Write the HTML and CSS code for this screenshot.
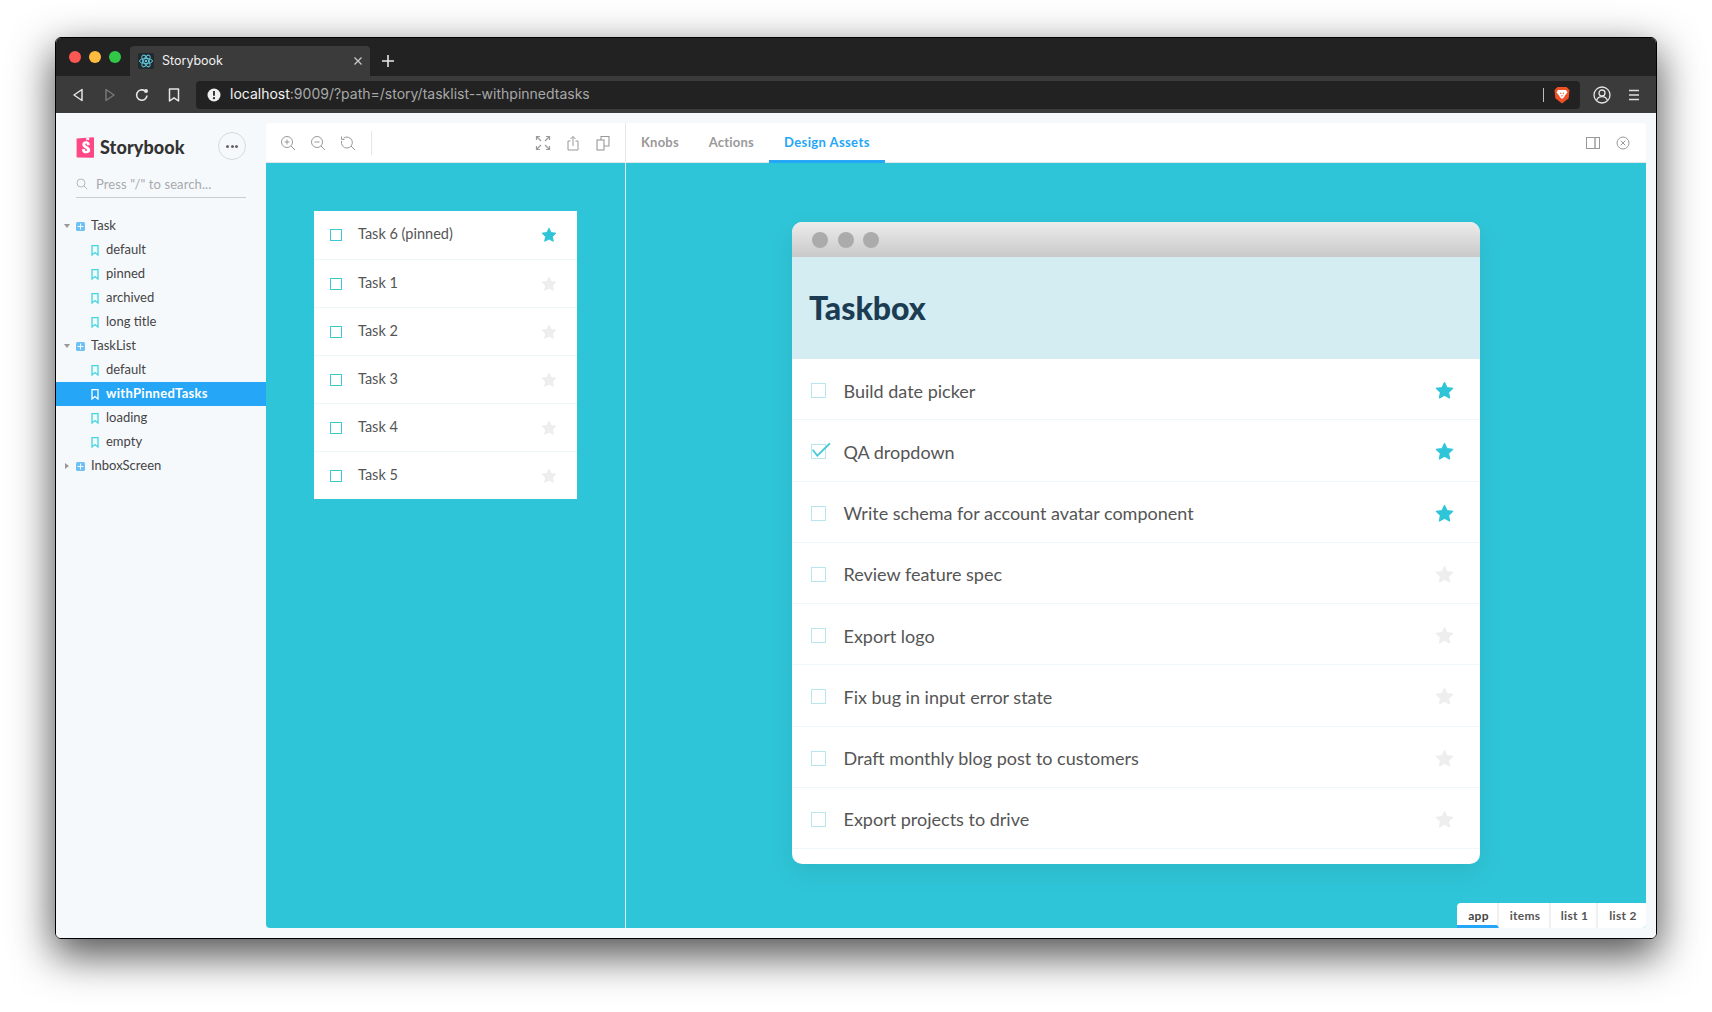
FILE: index.html
```html
<!DOCTYPE html>
<html lang="en">
<head>
  <meta charset="UTF-8">
  <title>Storybook</title>
  <link rel="stylesheet" href="styles.css">
</head>
<body>
  <svg class="defs" width="0" height="0">
    <symbol id="star" viewBox="0 0 16 16"><path d="M8 1.200l2.100 4.400 4.800.6-3.500 3.300.9 4.800L8 12l-4.300 2.300.9-4.800L1.100 6.200l4.800-.6z" fill="currentColor" stroke="currentColor" stroke-width="1" stroke-linejoin="round"/></symbol>
    <symbol id="mark" viewBox="0 0 8 11"><path d="M1 .7h6v9.300L4 7.600 1 10z" fill="none" stroke="currentColor" stroke-width="1.300"/></symbol>
    <symbol id="comp" viewBox="0 0 9 9"><rect width="9" height="9" rx="1.500" fill="#6ec1f5"/><path d="M4.500 1.500v6M1.500 4.500h6" stroke="#f6f9fc" stroke-width="1"/></symbol>
  </svg>

  <div class="window">
    <div class="tabstrip">
      <div class="lights"><i class="red"></i><i class="amber"></i><i class="green"></i></div>
      <div class="tab">
        <svg class="favicon" viewBox="0 0 16 16"><rect width="16" height="16" rx="2" fill="#20292c"/><g fill="none" stroke="#61c5dc" stroke-width="1"><ellipse cx="8" cy="8" rx="6.500" ry="2.600"/><ellipse cx="8" cy="8" rx="6.500" ry="2.600" transform="rotate(60 8 8)"/><ellipse cx="8" cy="8" rx="6.500" ry="2.600" transform="rotate(120 8 8)"/></g><circle cx="8" cy="8" r="1.300" fill="#61c5dc"/></svg>
        <span class="tab-title">Storybook</span>
        <svg class="tab-close" viewBox="0 0 10 10"><path d="M1.500 1.500l7 7M8.500 1.500l-7 7" stroke="#c9c9c9" stroke-width="1.300"/></svg>
      </div>
      <svg class="tab-new" viewBox="0 0 14 14"><path d="M7 1v12M1 7h12" stroke="#e8e8e8" stroke-width="1.600"/></svg>
    </div>

    <div class="toolbar">
      <div class="nav-buttons">
        <svg viewBox="0 0 16 16"><path d="M12 2.500v11L4 8z" fill="none" stroke="#e6e6e6" stroke-width="1.500" stroke-linejoin="round"/></svg>
        <svg viewBox="0 0 16 16"><path d="M4 2.500v11L12 8z" fill="none" stroke="#777" stroke-width="1.500" stroke-linejoin="round"/></svg>
        <svg viewBox="0 0 16 16"><path d="M13 8.500A5.200 5.200 0 1 1 10.800 3.800" fill="none" stroke="#e6e6e6" stroke-width="1.600"/><circle cx="12" cy="4" r="2" fill="#e6e6e6"/></svg>
        <svg viewBox="0 0 16 16"><path d="M3.500 2h9v12L8 10.800 3.500 14z" fill="none" stroke="#e6e6e6" stroke-width="1.500" stroke-linejoin="round"/></svg>
      </div>
      <div class="address">
        <svg class="info" viewBox="0 0 14 14"><circle cx="7" cy="7" r="6.500" fill="#efefef"/><path d="M7 3v4.800" stroke="#222" stroke-width="1.800"/><circle cx="7" cy="10.200" r="1.100" fill="#222"/></svg>
        <span class="url"><b>localhost</b>:9009/?path=/story/tasklist--withpinnedtasks</span>
        <span class="address-sep"></span>
        <svg class="brave" viewBox="0 0 16 18"><path d="M3.500 1h9L15.500 4l-.8 8.200L8 17.500 1.300 12.200.5 4z" fill="#ef5027"/><path d="M4 4h8l1.500 2.300-2.500 3.200-1 1.700L8 13 6 11.200l-1-1.700-2.500-3.200z" fill="#fff"/><path d="M6 7.300h1.300M8.700 7.300H10M8 9v1.500" stroke="#ef5027" stroke-width="1"/></svg>
      </div>
      <svg class="account" viewBox="0 0 18 18"><g fill="none" stroke="#e6e6e6" stroke-width="1.300"><circle cx="9" cy="9" r="8"/><circle cx="9" cy="7" r="3"/><path d="M3.500 14.500c1-2.800 3-3.800 5.500-3.800s4.500 1 5.500 3.800"/></g></svg>
      <svg class="menu" viewBox="0 0 12 12"><path d="M1 1.500h10M1 6h10M1 10.500h10" stroke="#dedede" stroke-width="1.500"/></svg>
    </div>

    <div class="app">
      <aside class="sidebar">
        <div class="brand">
          <svg class="logo" viewBox="0 0 18 21"><path d="M.6 1.500 17.300.3c.4 0 .7.300.7.700v19c0 .4-.3.700-.7.700L1.300 20.500c-.4 0-.7-.3-.7-.7z" fill="#ff4785"/><path d="M13.200.5l-.1 2.700c0 .2-.2.300-.3.100L11.700 2.500l-1.200.9c-.1.100-.3 0-.3-.2l.1-2.500zM10.800 7.900c0 .4 2.600.2 3 0 0-2.400-1.300-3.700-3.700-3.700S6.300 5.500 6.300 7.500c0 3.600 4.800 3.600 4.800 5.600 0 .6-.3.900-.9.900-.8 0-1.100-.4-1.100-1.800 0-.3-2.800-.4-3 0-.2 3.200 1.800 4.100 4.100 4.100s4-1.200 4-3.300c0-3.800-4.900-3.700-4.900-5.600 0-.8.500-.9.800-.9.400 0 1 .1.700 1.400z" fill="#fff"/></svg>
          <span class="brand-name">Storybook</span>
          <span class="more"><i></i><i></i><i></i></span>
        </div>
        <div class="search">
          <svg viewBox="0 0 12 12"><circle cx="5" cy="5" r="4" fill="none" stroke="#b5b9bd" stroke-width="1"/><path d="M8 8l3.300 3.300" stroke="#b5b9bd" stroke-width="1"/></svg>
          <span>Press "/" to search...</span>
        </div>
        <ul class="tree">
          <li class="node"><span class="caret"></span><svg class="comp"><use href="#comp"/></svg>Task</li>
          <li class="story"><svg class="mark"><use href="#mark"/></svg>default</li>
          <li class="story"><svg class="mark"><use href="#mark"/></svg>pinned</li>
          <li class="story"><svg class="mark"><use href="#mark"/></svg>archived</li>
          <li class="story"><svg class="mark"><use href="#mark"/></svg>long title</li>
          <li class="node"><span class="caret"></span><svg class="comp"><use href="#comp"/></svg>TaskList</li>
          <li class="story"><svg class="mark"><use href="#mark"/></svg>default</li>
          <li class="story selected"><svg class="mark"><use href="#mark"/></svg>withPinnedTasks</li>
          <li class="story"><svg class="mark"><use href="#mark"/></svg>loading</li>
          <li class="story"><svg class="mark"><use href="#mark"/></svg>empty</li>
          <li class="node"><span class="caret closed"></span><svg class="comp"><use href="#comp"/></svg>InboxScreen</li>
        </ul>
      </aside>

      <main class="panels">
        <section class="pane-left">
          <div class="pane-bar">
            <div class="bar-group">
              <svg viewBox="0 0 16 16"><g fill="none" stroke="#999" stroke-width="1"><circle cx="7" cy="7" r="5.500"/><path d="M11 11l4 4M7 4.500v5M4.500 7h5"/></g></svg>
              <svg viewBox="0 0 16 16"><g fill="none" stroke="#999" stroke-width="1"><circle cx="7" cy="7" r="5.500"/><path d="M11 11l4 4M4.500 7h5"/></g></svg>
              <svg viewBox="0 0 16 16"><g fill="none" stroke="#999" stroke-width="1"><path d="M3.500 3.200A5.500 5.500 0 1 1 1.600 6"/><path d="M11 11l4 4M1.500 1.500v3h3"/></g></svg>
              <span class="bar-sep"></span>
            </div>
            <div class="bar-group">
              <svg viewBox="0 0 16 16"><g fill="none" stroke="#999" stroke-width="1.200"><path d="M2 2l4 4M14 2l-4 4M2 14l4-4M14 14l-4-4"/><path d="M1.500 5V1.500H5M11 1.500h3.500V5M1.500 11v3.500H5M11 14.500h3.500V11"/></g></svg>
              <svg viewBox="0 0 16 16"><g fill="none" stroke="#999" stroke-width="1"><path d="M5.500 6H3v9h10V6h-2.500M8 11V1.500M5.500 4L8 1.500 10.500 4"/></g></svg>
              <svg viewBox="0 0 16 16"><g fill="none" stroke="#999" stroke-width="1.100"><rect x="2" y="5" width="7" height="10"/><path d="M6 5V1.500h8V11h-5"/></g></svg>
            </div>
          </div>
          <div class="canvas">
            <div class="task-card">
              <div class="task-row"><span class="check"></span><span class="task-name">Task 6 (pinned)</span><svg class="star on"><use href="#star"/></svg></div>
              <div class="task-row"><span class="check"></span><span class="task-name">Task 1</span><svg class="star"><use href="#star"/></svg></div>
              <div class="task-row"><span class="check"></span><span class="task-name">Task 2</span><svg class="star"><use href="#star"/></svg></div>
              <div class="task-row"><span class="check"></span><span class="task-name">Task 3</span><svg class="star"><use href="#star"/></svg></div>
              <div class="task-row"><span class="check"></span><span class="task-name">Task 4</span><svg class="star"><use href="#star"/></svg></div>
              <div class="task-row"><span class="check"></span><span class="task-name">Task 5</span><svg class="star"><use href="#star"/></svg></div>
            </div>
          </div>
        </section>

        <section class="pane-right">
          <div class="pane-bar">
            <div class="addon-tabs">
              <span class="addon-tab">Knobs</span>
              <span class="addon-tab">Actions</span>
              <span class="addon-tab active">Design Assets</span>
            </div>
            <div class="bar-group">
              <svg viewBox="0 0 14 14"><g fill="none" stroke="#999" stroke-width="1"><rect x=".5" y="1.500" width="13" height="11"/><path d="M9 1.500v11" stroke-width="1.400"/></g></svg>
              <svg viewBox="0 0 14 14"><g fill="none" stroke="#999" stroke-width="1"><circle cx="7" cy="7" r="6"/><path d="M4.700 4.700l4.600 4.600M9.300 4.700l-4.600 4.600"/></g></svg>
            </div>
          </div>
          <div class="canvas canvas-design">
            <div class="mock">
              <div class="mock-chrome"><i></i><i></i><i></i></div>
              <div class="mock-head">Taskbox</div>
              <div class="mock-row"><span class="mock-check"></span><span class="mock-name">Build date picker</span><svg class="mock-star on"><use href="#star"/></svg></div>
              <div class="mock-row"><span class="mock-check done"><svg viewBox="0 0 20 16"><path d="M1.700 6.700l4.600 6L19 .3" fill="none" stroke="#45c8d8" stroke-width="1.800"/></svg></span><span class="mock-name">QA dropdown</span><svg class="mock-star on"><use href="#star"/></svg></div>
              <div class="mock-row"><span class="mock-check"></span><span class="mock-name">Write schema for account avatar component</span><svg class="mock-star on"><use href="#star"/></svg></div>
              <div class="mock-row"><span class="mock-check"></span><span class="mock-name">Review feature spec</span><svg class="mock-star"><use href="#star"/></svg></div>
              <div class="mock-row"><span class="mock-check"></span><span class="mock-name">Export logo</span><svg class="mock-star"><use href="#star"/></svg></div>
              <div class="mock-row"><span class="mock-check"></span><span class="mock-name">Fix bug in input error state</span><svg class="mock-star"><use href="#star"/></svg></div>
              <div class="mock-row"><span class="mock-check"></span><span class="mock-name">Draft monthly blog post to customers</span><svg class="mock-star"><use href="#star"/></svg></div>
              <div class="mock-row"><span class="mock-check"></span><span class="mock-name">Export projects to drive</span><svg class="mock-star"><use href="#star"/></svg></div>
            </div>
            <div class="asset-tabs">
              <span class="asset-tab current">app</span>
              <span class="asset-tab">items</span>
              <span class="asset-tab">list 1</span>
              <span class="asset-tab">list 2</span>
            </div>
          </div>
        </section>
      </main>
    </div>
  </div>
</body>
</html>
```

FILE: styles.css
```css
* {
  box-sizing: border-box;
}

body {
  margin: 0;
  min-height: 1012px;
  padding: 37px 0 0 55px;
  background-color: #fff;
  font-family: "Lato", sans-serif;
  color: #444;
}

svg {
  display: block;
  flex: none;
}

.defs {
  position: absolute;
}

.window {
  width: 1602px;
  height: 902px;
  display: flex;
  flex-direction: column;
  border: 1px solid #000;
  border-radius: 6px;
  overflow: hidden;
  box-shadow: 0 15px 42px 2px rgba(0, 0, 0, 0.68);
}

/* browser chrome */
.tabstrip {
  height: 38px;
  flex: none;
  display: flex;
  align-items: flex-end;
  background-color: #222;
}

.lights {
  width: 74px;
  height: 38px;
  padding: 13px 0 0 13px;
  display: flex;
  gap: 8px;
}

.lights i {
  width: 12px;
  height: 12px;
  border-radius: 50%;
}

.red { background-color: #fc5753; }
.amber { background-color: #fdbc40; }
.green { background-color: #33c748; }

.tab {
  width: 240px;
  height: 30px;
  display: flex;
  align-items: center;
  padding: 0 8px;
  border-radius: 4px 4px 0 0;
  background-color: #3b3b3b;
}

.favicon {
  width: 16px;
  height: 16px;
}

.tab-title {
  flex: 1;
  margin: 0 0 1px 8px;
  font-family: "Inter", sans-serif;
  font-size: 12.500px;
  color: #f0f0f0;
}

.tab-close {
  width: 10px;
  height: 10px;
  margin-right: -1px;
}

.tab-new {
  width: 14px;
  height: 14px;
  margin: 0 0 8px 11px;
}

.toolbar {
  height: 37px;
  flex: none;
  display: flex;
  align-items: center;
  background-color: #3b3b3b;
}

.nav-buttons {
  width: 140px;
  padding-left: 14px;
  display: flex;
  gap: 16px;
}

.nav-buttons svg {
  width: 16px;
  height: 16px;
}

.address {
  width: 1384px;
  height: 28px;
  display: flex;
  align-items: center;
  padding-left: 11px;
  border-radius: 4px;
  background-color: #222;
}

.info {
  width: 14px;
  height: 14px;
}

.url {
  flex: 1;
  margin: 0 0 3px 9px;
  font-family: "Inter", sans-serif;
  font-size: 14px;
  color: #a8a8a8;
}

.url b {
  font-weight: 400;
  color: #f2f2f2;
}

.address-sep {
  width: 1px;
  height: 14px;
  background-color: #bbb;
}

.brave {
  width: 16px;
  height: 18px;
  margin: 0 10px;
}

.account {
  width: 18px;
  height: 18px;
  margin-left: 13px;
}

.menu {
  width: 12px;
  height: 12px;
  margin-left: 17px;
}

/* storybook */
.app {
  flex: 1;
  display: flex;
  min-height: 0;
  background-color: #f6f9fc;
}

.sidebar {
  width: 210px;
  flex: none;
}

.brand {
  display: flex;
  align-items: center;
  height: 28px;
  margin: 19px 20px 0;
}

.logo {
  width: 18px;
  height: 21px;
  margin-top: 2px;
}

.brand-name {
  margin: 2px 0 0 6px;
  font-size: 18px;
  font-weight: 900;
  letter-spacing: 0.1px;
  color: #333;
}

.more {
  width: 28px;
  height: 28px;
  margin-left: auto;
  display: flex;
  align-items: center;
  justify-content: center;
  gap: 1.500px;
  border: 1px solid #d6d9dc;
  border-radius: 50%;
}

.more i {
  width: 3px;
  height: 3px;
  border-radius: 50%;
  background-color: #666;
}

.search {
  display: flex;
  align-items: center;
  gap: 8px;
  width: 170px;
  height: 28px;
  margin: 10px 0 0 20px;
  border-bottom: 1px solid #c9ccd0;
  font-size: 13px;
  letter-spacing: 0.1px;
  color: #a6a9ad;
}

.search svg {
  width: 12px;
  height: 12px;
}

.tree {
  list-style: none;
  margin: 16px 0 0;
  padding: 0;
  font-size: 13px;
}

.tree li {
  height: 24px;
  display: flex;
  align-items: center;
  padding-bottom: 2px;
  color: #444;
}

.node {
  padding-left: 8px;
}

.caret {
  width: 0;
  height: 0;
  margin: 2px 6px 0 0;
  border-style: solid;
  border-width: 4px 3px 0;
  border-color: #999 transparent transparent;
}

.caret.closed {
  margin: 2px 7px 0 1px;
  border-width: 3px 0 3px 4px;
  border-color: transparent transparent transparent #999;
}

.comp {
  width: 9px;
  height: 9px;
  margin: 2px 6px 0 0;
}

.story {
  padding-left: 35px;
}

.mark {
  width: 8px;
  height: 11px;
  margin: 3px 7px 0 0;
  color: #3fd6e0;
}

.tree .selected {
  background-color: #25a6f7;
  color: #fff;
  font-weight: 700;
  letter-spacing: 0.3px;
}

.selected .mark {
  color: #fff;
}

.panels {
  flex: 1;
  display: flex;
  padding: 10px 10px 10px 0;
  min-width: 0;
}

.pane-left {
  width: 360px;
  flex: none;
  display: flex;
  flex-direction: column;
  border-right: 1px solid #e4e8ec;
  border-radius: 4px 0 0 4px;
  overflow: hidden;
}

.pane-right {
  flex: 1;
  display: flex;
  flex-direction: column;
  border-radius: 0 4px 4px 0;
  overflow: hidden;
}

.pane-bar {
  height: 40px;
  flex: none;
  display: flex;
  align-items: center;
  justify-content: space-between;
  background-color: #fff;
  border-bottom: 1px solid #e4e8ec;
}

.bar-group {
  display: flex;
  align-items: center;
  gap: 14px;
  padding: 0 14px;
}

.pane-left .bar-group:first-child {
  padding-right: 0;
}

.bar-group svg {
  width: 16px;
  height: 16px;
}

.pane-right .bar-group svg {
  width: 14px;
  height: 14px;
}

.pane-right .bar-group {
  gap: 16px;
  padding: 0 16px;
}

.bar-sep {
  width: 1px;
  height: 24px;
  margin-left: 1px;
  background-color: #e4e8ec;
}

.addon-tabs {
  display: flex;
  align-self: stretch;
}

.addon-tab {
  display: flex;
  align-items: center;
  padding: 0 15px 2px;
  margin-bottom: -1px;
  font-size: 13px;
  font-weight: 700;
  letter-spacing: 0.2px;
  color: #999;
}

.addon-tab.active {
  padding: 1px 15px 0;
  border-bottom: 3px solid #25a6f7;
  letter-spacing: 0.4px;
  color: #25a6f7;
}

.canvas {
  flex: 1;
  min-height: 0;
  padding: 48px;
  background-color: #2fc5d8;
}

.task-card {
  width: 263px;
  background-color: #fff;
}

.task-row {
  height: 48px;
  display: flex;
  align-items: center;
  padding: 0 20px 0 16px;
  border-bottom: 1px solid #eef7f8;
}

.task-row:first-child {
  height: 49px;
}

.task-row:last-child {
  height: 47px;
  border-bottom: none;
}

.check {
  width: 12px;
  height: 12px;
  border: 1px solid #3ec7d8;
}

.task-name {
  flex: 1;
  margin-left: 16px;
  padding-bottom: 3px;
  font-size: 14.500px;
  color: #555;
}

.star {
  width: 16px;
  height: 16px;
  color: #eee;
}

.star.on,
.mock-star.on {
  color: #2fc5d8;
}

.canvas-design {
  position: relative;
  padding: 59px 0 0 166px;
}

.mock {
  width: 688px;
  height: 642px;
  border-radius: 10px;
  overflow: hidden;
  background-color: #fff;
  box-shadow: 0 8px 24px rgba(0, 0, 0, 0.08);
}

.mock-chrome {
  height: 35px;
  display: flex;
  align-items: center;
  gap: 9.500px;
  padding-left: 20px;
  background: linear-gradient(#ececec, #c9c9c9);
}

.mock-chrome i {
  width: 16px;
  height: 16px;
  border-radius: 50%;
  background-color: #ababab;
}

.mock-head {
  height: 102px;
  padding: 31px 0 0 17px;
  background-color: #d3edf2;
  font-size: 32px;
  font-weight: 900;
  color: #1b3c52;
}

.mock-row {
  height: 61.250px;
  display: flex;
  align-items: center;
  padding: 3px 26px 0 19px;
  border-bottom: 1px solid #eef7f9;
}

.mock-check {
  position: relative;
  width: 15px;
  height: 15px;
  border: 1px solid #b7e6ec;
}

.mock-check.done svg {
  position: absolute;
  left: -1px;
  top: -2px;
  width: 20px;
  height: 16px;
}

.mock-name {
  flex: 1;
  margin-left: 17.500px;
  font-size: 18px;
  color: #555;
}

.mock-star {
  width: 19px;
  height: 19px;
  color: #eee;
}

.asset-tabs {
  position: absolute;
  right: 0;
  bottom: 0;
  display: flex;
  height: 25px;
  border-radius: 4px 0 0 0;
  background-color: #fff;
  overflow: hidden;
}

.asset-tab {
  display: flex;
  align-items: center;
  justify-content: center;
  height: 25px;
  width: 47px;
  padding-left: 2px;
  border-right: 2px solid #eef0f2;
  font-size: 12px;
  font-weight: 700;
  letter-spacing: 0.3px;
  color: #555;
}

.asset-tab:nth-child(1) { width: 42px; }
.asset-tab:nth-child(2) { width: 52px; }
.asset-tab:last-child { width: 48px; border-right: none; }

.asset-tab.current {
  border-bottom: 3px solid #25a6f7;
  padding: 3px 0 0 3px;
  color: #444;
}
```
